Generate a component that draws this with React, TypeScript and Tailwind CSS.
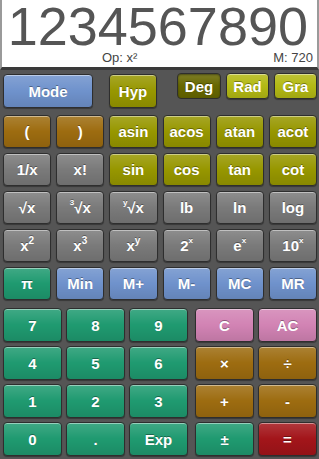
import React from 'react';

type Tone = 'blue' | 'olive' | 'oliveDark' | 'oliveLight' | 'brown' | 'gray' | 'green' | 'pink' | 'red';

const tones: Record<Tone, string> = {
  blue: 'bg-[#6f92cc]',
  olive: 'bg-[#979700]',
  oliveDark: 'bg-[#676700]',
  oliveLight: 'bg-[#b3b914]',
  brown: 'bg-[#9d6c10]',
  gray: 'bg-[#7a7a7a]',
  green: 'bg-[#1f9a70]',
  pink: 'bg-[#d283b4]',
  red: 'bg-[#a3151a]',
};

interface KeyProps {
  tone: Tone;
  className?: string;
  children: React.ReactNode;
}

// one glossy calculator key
const Key: React.FC<KeyProps> = ({ tone, className, children }) => (
  <button
    className={
      'flex items-center justify-center rounded-[4px] border border-[#2e2e2e] bg-linear-to-b from-white/15 via-transparent to-black/10 text-[15px] font-bold text-white leading-none shadow-[inset_0_1px_0_rgba(255,255,255,0.45),0_1px_1px_rgba(0,0,0,0.35)] [text-shadow:0_-1px_0_rgba(0,0,0,0.35)] ' +
      tones[tone] +
      ' ' +
      (className ?? '')
    }
  >
    {children}
  </button>
);

const Sup: React.FC<{ children: React.ReactNode; small?: boolean }> = ({ children, small }) => (
  <span className={small ? 'relative -top-[5px] text-[8px]' : 'relative -top-[5px] text-[10px]'}>{children}</span>
);

const sciRows: { label: React.ReactNode; tone: Tone }[][] = [
  [
    { label: '(', tone: 'brown' },
    { label: ')', tone: 'brown' },
    { label: 'asin', tone: 'olive' },
    { label: 'acos', tone: 'olive' },
    { label: 'atan', tone: 'olive' },
    { label: 'acot', tone: 'olive' },
  ],
  [
    { label: '1/x', tone: 'gray' },
    { label: 'x!', tone: 'gray' },
    { label: 'sin', tone: 'olive' },
    { label: 'cos', tone: 'olive' },
    { label: 'tan', tone: 'olive' },
    { label: 'cot', tone: 'olive' },
  ],
  [
    { label: '√x', tone: 'gray' },
    { label: <><Sup small>3</Sup>√x</>, tone: 'gray' },
    { label: <><Sup small>y</Sup>√x</>, tone: 'gray' },
    { label: 'lb', tone: 'gray' },
    { label: 'ln', tone: 'gray' },
    { label: 'log', tone: 'gray' },
  ],
  [
    { label: <>x<Sup>2</Sup></>, tone: 'gray' },
    { label: <>x<Sup>3</Sup></>, tone: 'gray' },
    { label: <>x<Sup>y</Sup></>, tone: 'gray' },
    { label: <>2<Sup small>x</Sup></>, tone: 'gray' },
    { label: <>e<Sup small>x</Sup></>, tone: 'gray' },
    { label: <>10<Sup small>x</Sup></>, tone: 'gray' },
  ],
  [
    { label: 'π', tone: 'green' },
    { label: 'Min', tone: 'blue' },
    { label: 'M+', tone: 'blue' },
    { label: 'M-', tone: 'blue' },
    { label: 'MC', tone: 'blue' },
    { label: 'MR', tone: 'blue' },
  ],
];

const digits = ['7', '8', '9', '4', '5', '6', '1', '2', '3', '0', '.', 'Exp'];

const ops: { label: string; tone: Tone }[] = [
  { label: 'C', tone: 'pink' },
  { label: 'AC', tone: 'pink' },
  { label: '×', tone: 'brown' },
  { label: '÷', tone: 'brown' },
  { label: '+', tone: 'brown' },
  { label: '-', tone: 'brown' },
  { label: '±', tone: 'green' },
  { label: '=', tone: 'red' },
];

export default function App() {
  return (
    <div className="h-[459px] w-[319px] overflow-hidden bg-[#555555] font-['Liberation_Sans',Arial,sans-serif]">
      {/* Display */}
      <div className="h-[70px] border-x-2 border-b-[3px] border-x-[#9a9a9a] border-b-[#3a3a3a] bg-white">
        <div className="h-[52px] pr-[9px] text-right text-[54px] leading-[52px] text-[#555555]">1234567890</div>
        <div className="flex text-[13px] leading-[12px] text-[#444444]">
          <span className="pl-[100px]">Op: x²</span>
          <span className="ml-auto pr-[4px]">M: 720</span>
        </div>
      </div>

      {/* Scientific keys */}
      <div className="pl-[3px] pr-[2px] pt-[4px]">
        <div className="flex h-[34px]">
          <Key tone="blue" className="w-[90px]">Mode</Key>
          <Key tone="olive" className="ml-[16px] w-[48px]">Hyp</Key>
          <div className="-mt-[1px] ml-auto flex h-[26px] gap-[5px]">
            <Key tone="oliveDark" className="w-[44px] shadow-[inset_0_1px_2px_rgba(0,0,0,0.4)]">Deg</Key>
            <Key tone="oliveLight" className="w-[43px]">Rad</Key>
            <Key tone="oliveLight" className="w-[43px]">Gra</Key>
          </div>
        </div>
        <div className="mt-[7px] grid grid-cols-6 gap-x-[5px] gap-y-[5px]">
          {sciRows.flat().map((k, i) => (
            <Key key={i} tone={k.tone} className="h-[33px]">
              {k.label}
            </Key>
          ))}
        </div>
      </div>

      {/* Number pad + operators */}
      <div className="flex gap-[7px] pl-[3px] pt-[8px]">
        <div className="grid w-[185px] grid-cols-3 gap-x-[4px] gap-y-[4px]">
          {digits.map((d) => (
            <Key key={d} tone="green" className="h-[34px]">
              {d}
            </Key>
          ))}
        </div>
        <div className="grid w-[122px] grid-cols-2 gap-x-[4px] gap-y-[4px]">
          {ops.map((o) => (
            <Key key={o.label} tone={o.tone} className="h-[34px]">
              {o.label}
            </Key>
          ))}
        </div>
      </div>
    </div>
  );
}
